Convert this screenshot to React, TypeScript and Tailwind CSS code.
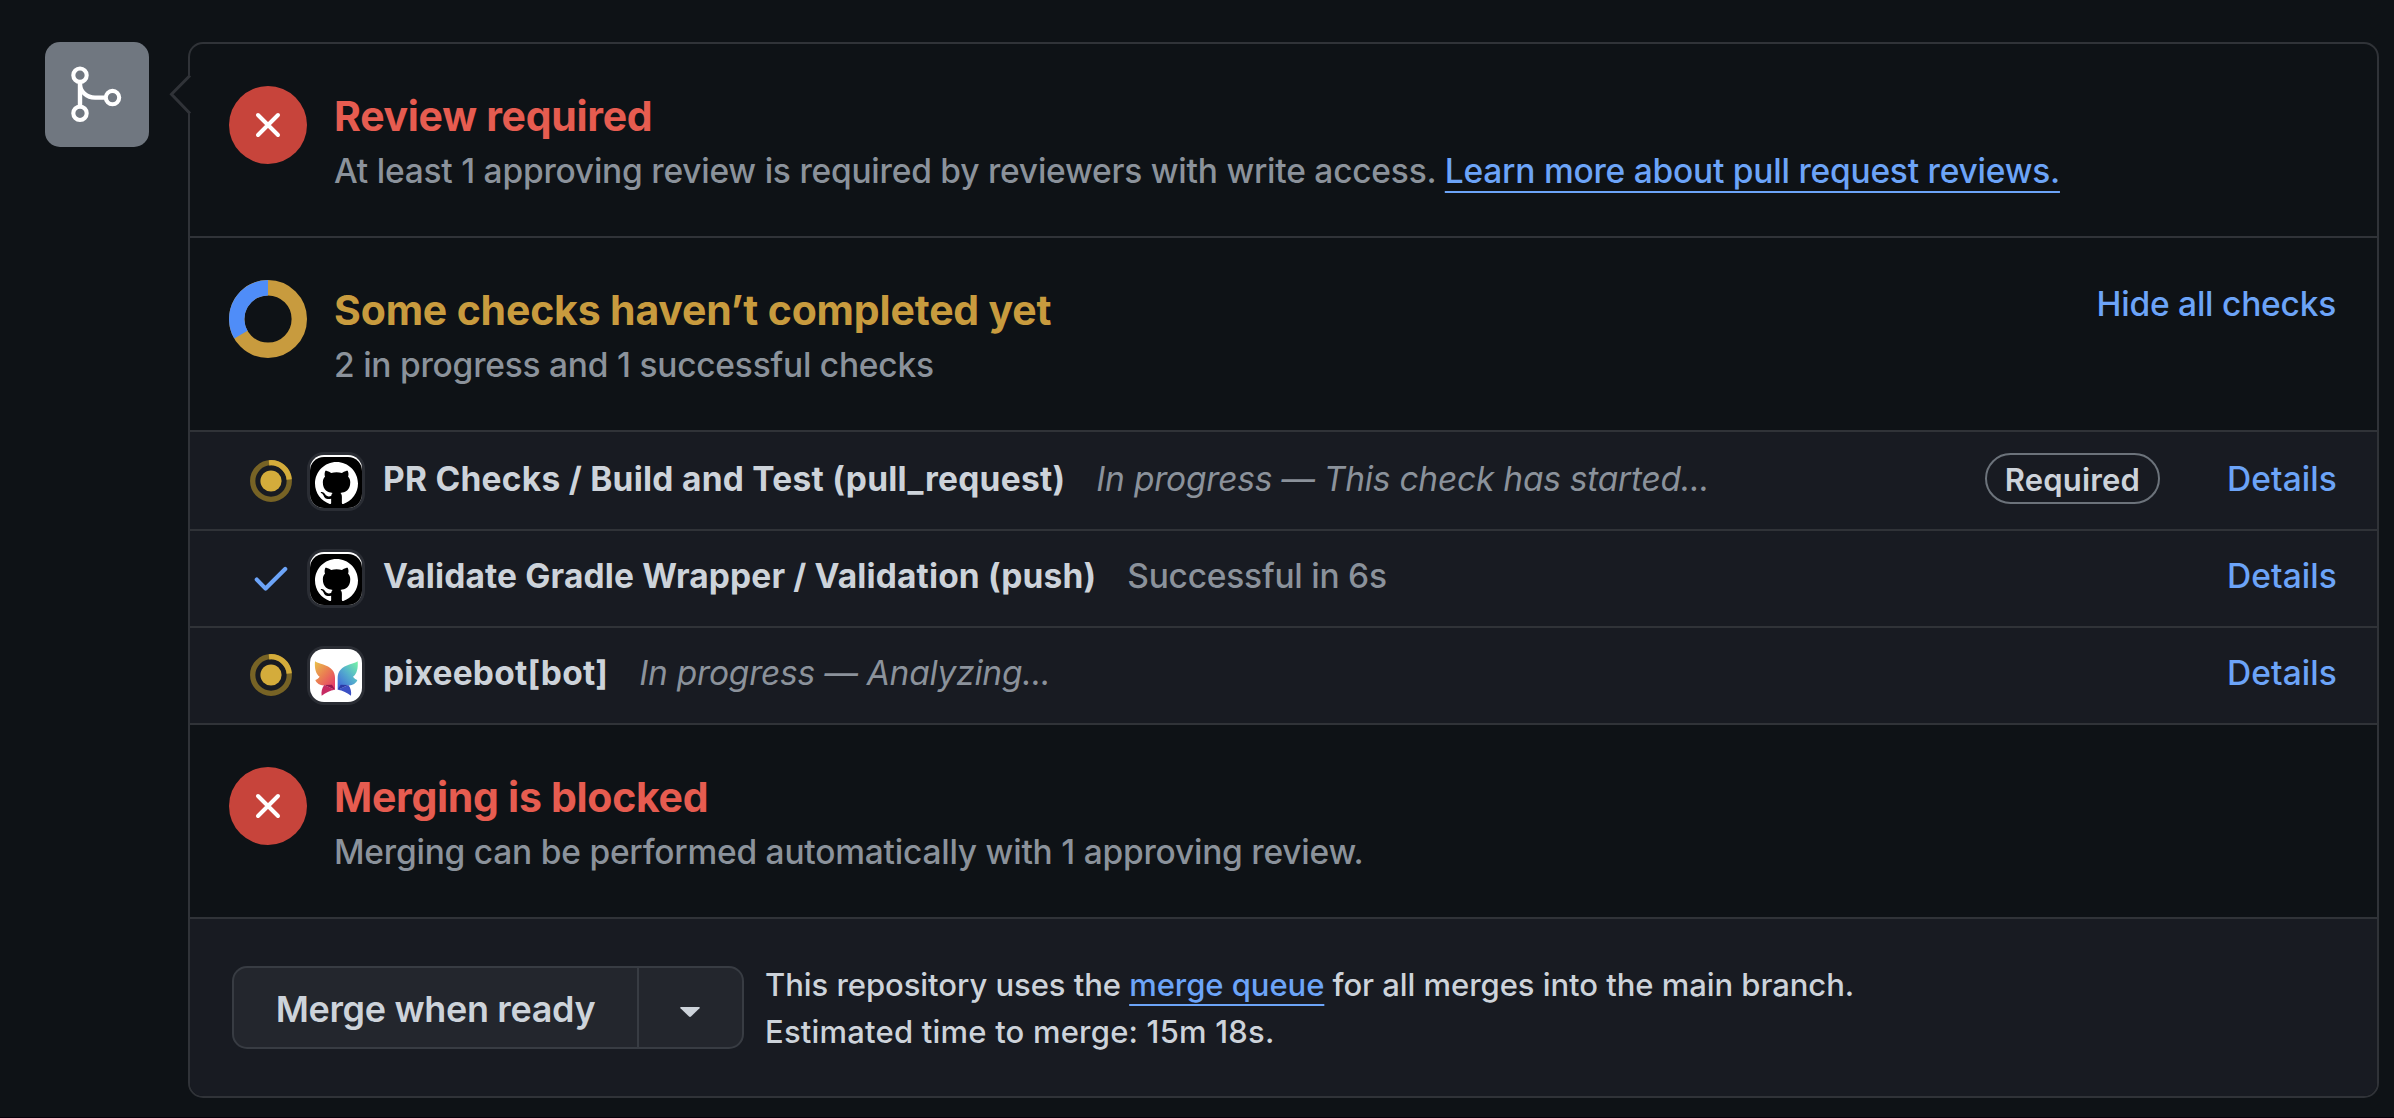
import type { ReactNode } from 'react';

function GitMergeIcon() {
  return (
    <svg className="h-[105px] w-[104px]" viewBox="0 0 104 105" fill="none" stroke="#ffffff">
      <circle cx="35" cy="33.2" r="6.7" strokeWidth="4.1" />
      <circle cx="35" cy="71.3" r="6.7" strokeWidth="4.1" />
      <circle cx="67.5" cy="55.6" r="6.7" strokeWidth="4.1" />
      <path d="M35 40.5V64" strokeWidth="4.4" />
      <path d="M35 42A15 13.6 0 0 0 50 55.6H60" strokeWidth="4.1" />
    </svg>
  );
}

function BlockedIcon() {
  return (
    <div className="flex size-[78px] shrink-0 items-center justify-center rounded-full bg-[#c7443b]">
      <svg className="size-[26px]" viewBox="0 0 26 26" fill="none" stroke="#ffffff" strokeWidth="4" strokeLinecap="round">
        <path d="M3 3L23 23M23 3L3 23" />
      </svg>
    </div>
  );
}

function ProgressDonut() {
  return (
    <svg className="size-[78px] shrink-0" viewBox="0 0 78 78" fill="none" strokeWidth="15.4">
      <circle cx="39" cy="39" r="31.3" stroke="#c89b3e" />
      <path d="M11.9 54.65A31.3 31.3 0 0 1 39 7.7" stroke="#4f8df8" />
    </svg>
  );
}

function PendingIcon() {
  return (
    <svg className="size-[42px]" viewBox="0 0 42 42" fill="none">
      <circle cx="21" cy="21" r="18.3" stroke="#776325" strokeWidth="5.3" />
      <path d="M19 2.8A18.3 18.3 0 0 1 39.2 19.5" stroke="#d4ac3b" strokeWidth="5.3" />
      <circle cx="21" cy="21" r="10.6" fill="#d4ac3b" />
    </svg>
  );
}

function CheckIcon() {
  return (
    <svg className="size-[42px]" viewBox="0 0 42 42" fill="none" stroke="#6ca4f8" strokeWidth="4.2" strokeLinecap="round" strokeLinejoin="round">
      <path d="M6.8 22.6L15.6 31.6L35.2 12" />
    </svg>
  );
}

function GitHubAvatar() {
  return (
    <div className="h-[53px] w-[52px] overflow-hidden rounded-[14px] bg-white pt-[2px] ring-[3px] ring-[#2a2d34]">
      <div className="flex h-[51px] items-center justify-center rounded-t-[14px] bg-black pt-px">
        <svg className="size-[43px]" viewBox="0 0 16 16" fill="#ffffff">
          <path d="M8 0C3.58 0 0 3.58 0 8c0 3.54 2.29 6.53 5.47 7.59.4.07.55-.17.55-.38 0-.19-.01-.82-.01-1.49-2.01.37-2.53-.49-2.69-.94-.09-.23-.48-.94-.82-1.13-.28-.15-.68-.52-.01-.53.63-.01 1.08.58 1.23.82.72 1.21 1.87.87 2.33.66.07-.52.28-.87.51-1.07-1.78-.2-3.64-.89-3.64-3.95 0-.87.31-1.59.82-2.15-.08-.2-.36-1.02.08-2.12 0 0 .67-.21 2.2.82.64-.18 1.32-.27 2-.27s1.36.09 2 .27c1.53-1.04 2.2-.82 2.2-.82.44 1.1.16 1.92.08 2.12.51.56.82 1.27.82 2.15 0 3.07-1.87 3.75-3.65 3.95.29.25.54.73.54 1.48 0 1.07-.01 1.93-.01 2.2 0 .21.15.46.55.38A8.01 8.01 0 0 0 16 8c0-4.42-3.58-8-8-8Z" />
        </svg>
      </div>
    </div>
  );
}

function PixeeAvatar() {
  return (
    <div className="h-[53px] w-[52px] overflow-hidden rounded-[14px] bg-white ring-[3px] ring-[#2a2d34]">
      <svg className="h-[53px] w-[52px]" viewBox="0 0 156 159">
        <defs>
          <linearGradient id="wing-warm" x1="0.1" y1="0" x2="0.9" y2="1">
            <stop offset="0" stopColor="#e9bc4a" />
            <stop offset="0.45" stopColor="#ea7f52" />
            <stop offset="1" stopColor="#e5366c" />
          </linearGradient>
          <linearGradient id="wing-cool" x1="0.9" y1="0" x2="0.1" y2="1">
            <stop offset="0" stopColor="#74efa8" />
            <stop offset="0.45" stopColor="#55b2cc" />
            <stop offset="1" stopColor="#3f63dc" />
          </linearGradient>
        </defs>
        <path d="M15 37C27 45 52 46 67 63C73 70 75 78 75 86V122L47 108C36 112 20 105 16 93C21 91 26 87 29 83C18 77 13 58 15 37Z" fill="url(#wing-warm)" />
        <path d="M43 108L75 122C60 123 46 132 35 140C33 128 36 117 43 108Z" fill="#c62a62" />
        <path d="M43 108L66 107L75 122Z" fill="#96174f" />
        <path d="M143 37C131 45 106 46 91 63C85 70 83 78 83 86V122L111 108C122 112 138 105 142 93C137 91 132 87 129 83C140 77 145 58 143 37Z" fill="url(#wing-cool)" />
        <path d="M115 108L83 122C98 123 112 132 123 140C125 128 122 117 115 108Z" fill="#3a50c4" />
        <path d="M115 108L92 107L83 122Z" fill="#2b3aa6" />
      </svg>
    </div>
  );
}

function Section({ icon, title, titleClass, children, action }: { icon: ReactNode; title: string; titleClass: string; children: ReactNode; action?: ReactNode }) {
  return (
    <section className="flex h-[194px] items-start border-b-2 border-[#303338] pr-[41px] pl-[39px]">
      <div className="mt-[42px] mr-[27px] shrink-0">{icon}</div>
      <div className="mt-[47px] grow">
        <h3 className={`text-[41px] leading-[50px] font-[680] ${titleClass}`}>{title}</h3>
        <p className="mt-[5px] text-[33.5px] leading-[50px] tracking-[-0.22px] text-[#8b929b]">{children}</p>
      </div>
      {action}
    </section>
  );
}

function CheckRow({ icon, avatar, name, nameClass, status, italic, required, first }: { icon: ReactNode; avatar: ReactNode; name: string; nameClass: string; status: string; italic?: boolean; required?: boolean; first?: boolean }) {
  return (
    <li className={`flex items-center border-b-2 border-[#303338] bg-[#181b22] pr-[40px] pl-[60px] text-[33.5px] leading-[50px] ${first ? 'h-[99px] pt-[2px]' : 'h-[97px]'}`}>
      <div className="mr-[18px] mb-[2px]">{icon}</div>
      <div className="mr-[21px]">{avatar}</div>
      <div className="mb-[5px] flex grow gap-[31px]">
        <span className={`font-[680] text-[#cdd3da] ${nameClass}`}>{name}</span>
        <span className={italic ? 'tracking-[-0.22px] text-[#8b929b] italic' : 'tracking-[-0.22px] text-[#8b929b]'}>{status}</span>
      </div>
      {required && (
        <span className="mr-[67px] mb-[6px] flex h-[51px] w-[175px] items-center justify-center rounded-full border-2 border-[#6c737b] pt-[2px] text-[31px] font-[560] tracking-[0.15px] text-[#cdd3da]">
          Required
        </span>
      )}
      <a className="mb-[5px] tracking-[0.1px] text-[#6ca4f8]">Details</a>
    </li>
  );
}

function Link({ children }: { children: ReactNode }) {
  return <a className="text-[#6ca4f8] underline decoration-2 underline-offset-[8px]">{children}</a>;
}

export default function App() {
  return (
    <main className="flex h-[1118px] w-full items-start overflow-hidden border-b border-[#05000a] bg-[#0e1216] pt-[42px] pl-[45px] font-[Inter,'Liberation_Sans',sans-serif] font-[450]">
      <div className="h-[105px] w-[104px] shrink-0 overflow-hidden rounded-[15px] bg-[#707780]">
        <GitMergeIcon />
      </div>

      <div className="relative ml-[39px] h-[1056px] w-[2191px] shrink-0 rounded-[15px] border-2 border-[#303338]">
        <svg className="absolute top-[29px] -left-[22px] h-[44px] w-[24px]" viewBox="0 0 24 44" fill="none">
          <path d="M24 2.5H21.5L3.5 21.5L21.5 40.5H24Z" fill="#0e1216" />
          <path d="M22 2.5L3.5 21.3L22 40.5" stroke="#303338" strokeWidth="3" />
        </svg>

        <Section icon={<BlockedIcon />} title="Review required" titleClass="tracking-[-0.3px] text-[#e65c50]">
          At least 1 approving review is required by reviewers with write access. <Link>Learn more about pull request reviews.</Link>
        </Section>

        <Section
          icon={<ProgressDonut />}
          title="Some checks haven’t completed yet"
          titleClass="tracking-[-0.18px] text-[#c89b3e]"
          action={<button className="mt-[41px] text-[33.5px] leading-[50px] tracking-[-0.22px] text-[#6ca4f8]">Hide all checks</button>}
        >
          2 in progress and 1 successful checks
        </Section>

        <ul>
          <CheckRow first required italic icon={<PendingIcon />} avatar={<GitHubAvatar />} name="PR Checks / Build and Test (pull_request)" nameClass="tracking-[0.26px]" status="In progress — This check has started..." />
          <CheckRow icon={<CheckIcon />} avatar={<GitHubAvatar />} name="Validate Gradle Wrapper / Validation (push)" nameClass="tracking-[0.14px]" status="Successful in 6s" />
          <CheckRow italic icon={<PendingIcon />} avatar={<PixeeAvatar />} name="pixeebot[bot]" nameClass="tracking-[0.2px]" status="In progress — Analyzing..." />
        </ul>

        <Section icon={<BlockedIcon />} title="Merging is blocked" titleClass="tracking-[-0.3px] text-[#e65c50]">
          Merging can be performed automatically with 1 approving review.
        </Section>

        <footer className="flex h-[177px] items-start rounded-b-[13px] bg-[#181b22] pl-[42px]">
          <div className="mt-[47px] flex h-[83px] w-[512px] rounded-[15px] border-2 border-[#383c43] bg-[#23262d] text-[#cdd3da]">
            <button className="w-[405px] border-r-2 border-[#383c43] pt-[2px] text-[36px] font-[560] tracking-[-0.35px]">Merge when ready</button>
            <button className="flex grow items-center justify-center pt-[9px]">
              <svg className="mr-px h-[10px] w-[20px]" viewBox="0 0 20 10" fill="currentColor">
                <path d="M1 0H19Q20.4 0.3 19.5 1.2L11 9.6Q10 10.3 9 9.6L0.5 1.2Q-0.4 0.3 1 0Z" />
              </svg>
            </button>
          </div>
          <div className="mt-[42px] ml-[21px] text-[31px] leading-[47px] text-[#cdd3da]">
            <p className="tracking-[-0.05px]">
              This repository uses the <Link>merge queue</Link> for all merges into the main branch.
            </p>
            <p className="tracking-[0.2px]">Estimated time to merge: 15m 18s.</p>
          </div>
        </footer>
      </div>
    </main>
  );
}
